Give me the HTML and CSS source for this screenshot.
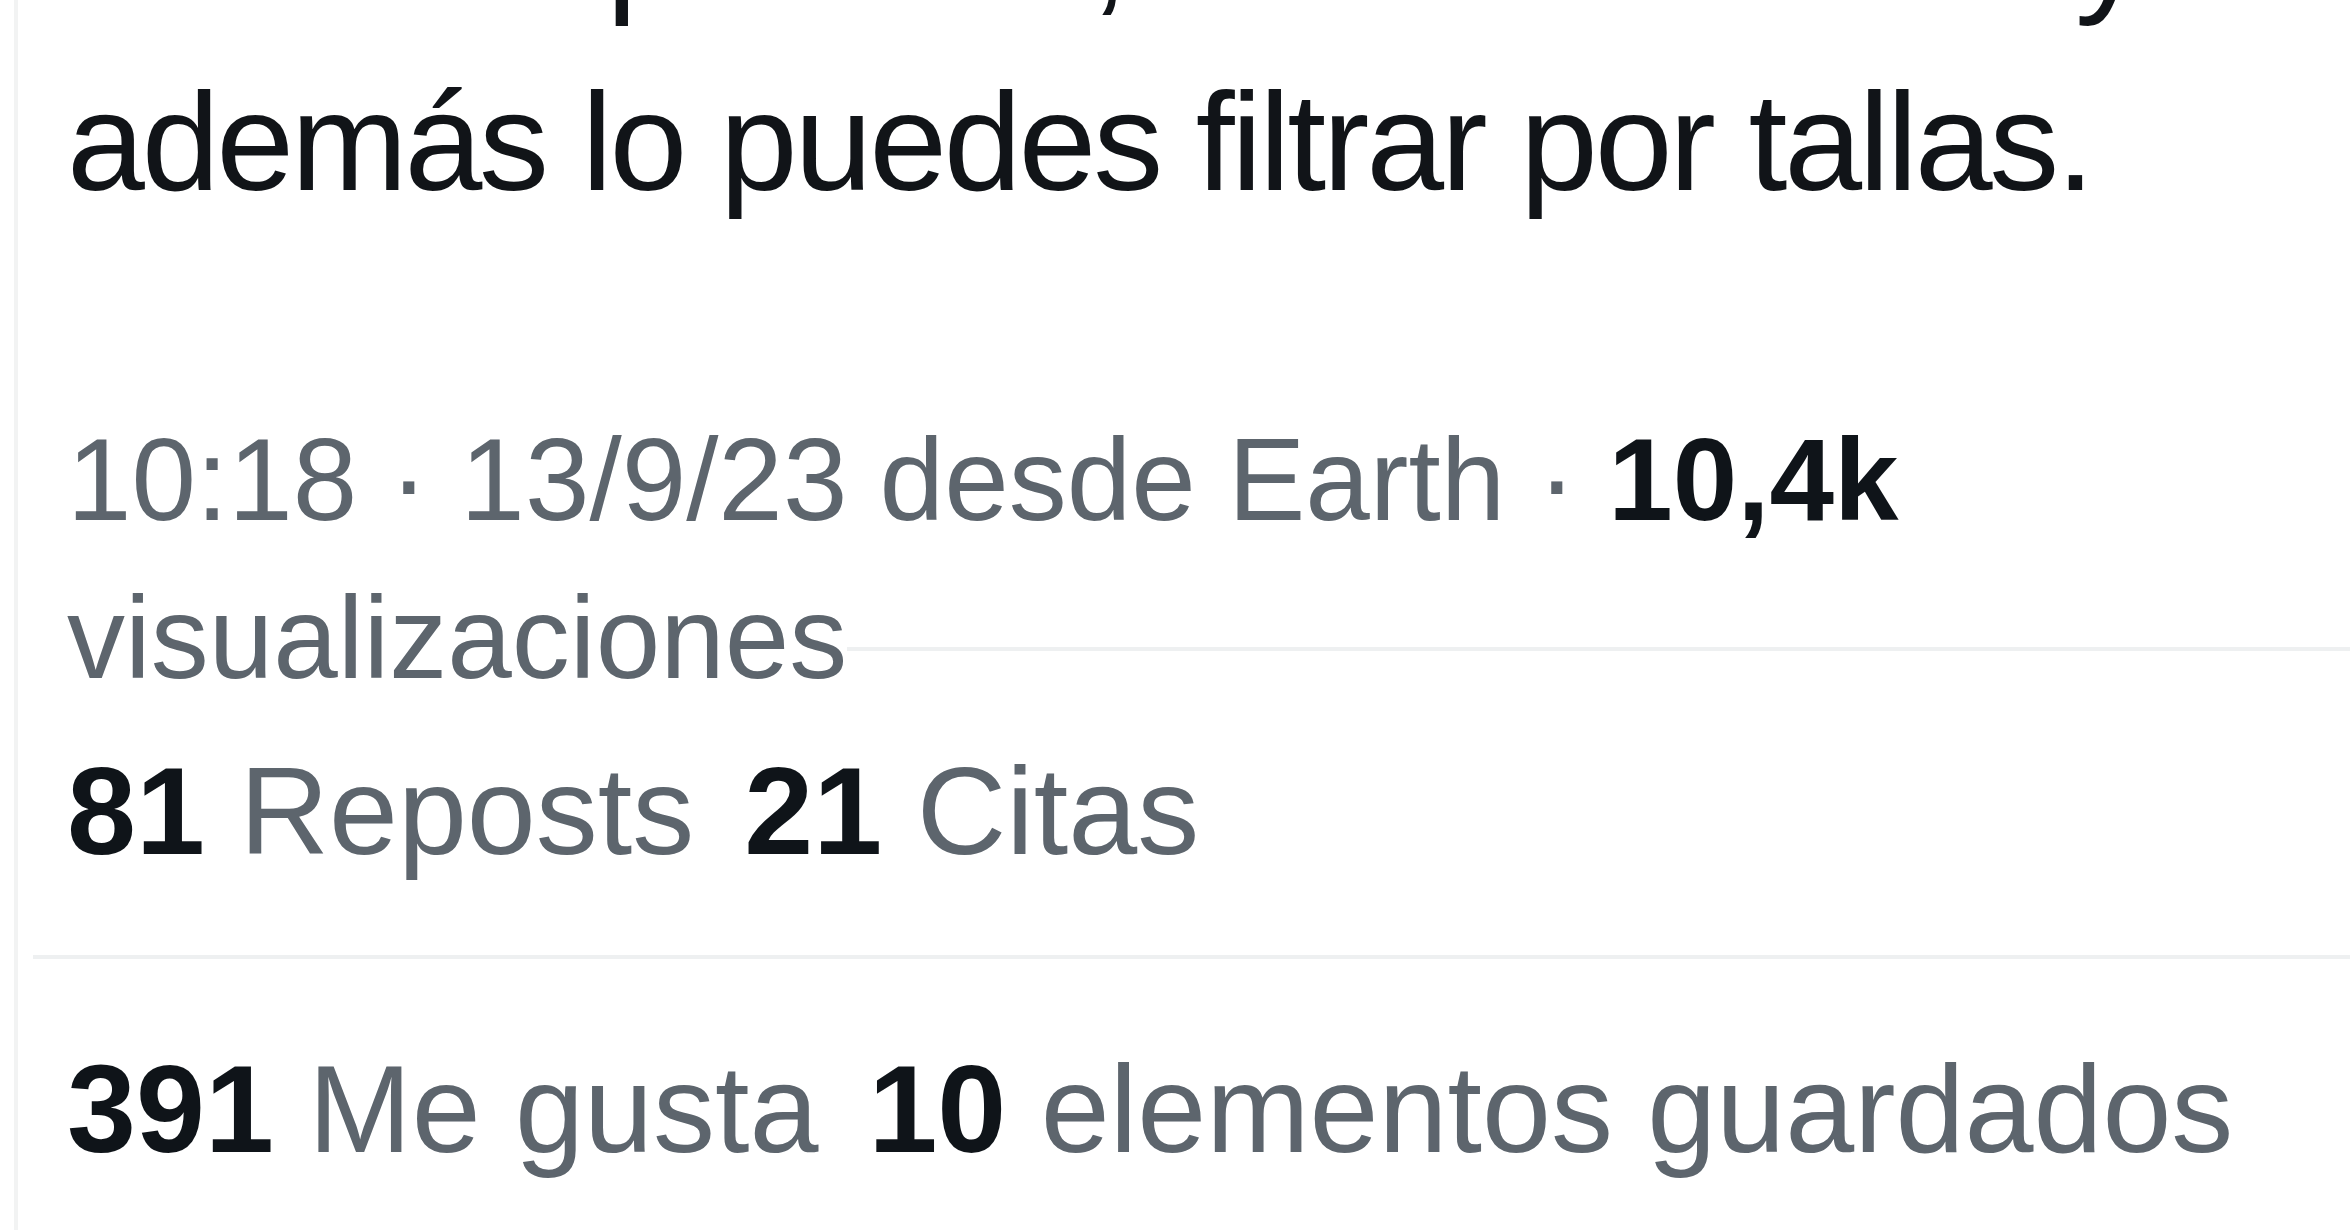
FILE: index.html
```
<!DOCTYPE html>
<html lang="es">
<head>
    <meta charset="UTF-8">
    <meta name="viewport" content="width=device-width, initial-scale=1.0">
    <title>Post</title>
    <link rel="stylesheet" href="styles.css">
</head>
<body>
    <article class="post">
        <!-- texto del post -->
        <div class="post-text">recién separadas, las divorciadas y además lo puedes filtrar por tallas.</div>

        <!-- fecha y vistas -->
        <div class="post-meta">
            <span class="meta-text">10:18 · 13/9/23 desde Earth · <b class="num">10,4k</b> visualizaciones</span>
        </div>

        <div class="stats-row first">
            <span class="stat"><b class="num">81</b> Reposts</span>
            <span class="stat"><b class="num">21</b> Citas</span>
        </div>
        <div class="stats-row second">
            <span class="stat"><b class="num">391</b> Me gusta</span>
            <span class="stat"><b class="num">10</b> elementos guardados</span>
        </div>
    </article>
</body>
</html>
```
FILE: styles.css
```
html {
    overflow: hidden;
}
html, body {
    margin: 0;
    padding: 0;
    background: #fff;
}
body {
    font-family: "Liberation Sans", Arial, sans-serif;
    color: #0f1419;
}
.post {
    margin-left: 14px;
    border-left: 4px solid #f2f3f3;
    padding-left: 15px;
    padding-bottom: 38px;
}
.post-text {
    margin-top: -148px;
    padding-left: 34px;
    width: 2100px;
    font-size: 140px;
    line-height: 193px;
    letter-spacing: -3.2px;
    color: #111418;
}
.post-meta {
    margin-top: 163px;
    height: 246px;
    border-bottom: 4px solid #eef0f1;
    font-size: 116px;
    line-height: 158px;
    color: #5d656d;
}
/* the second line of the meta runs over the divider, hiding it */
.meta-text {
    position: relative;
    z-index: 1;
    padding-left: 34px;
    background: #fff;
    -webkit-box-decoration-break: clone;
    box-decoration-break: clone;
}
.num {
    font-weight: 700;
    color: #0f1419;
}
.stats-row {
    display: flex;
    gap: 50px;
    padding-left: 34px;
    font-size: 124px;
    line-height: 165px;
    color: #5d656d;
    white-space: nowrap;
}
.stats-row.first {
    padding-top: 78px;
    padding-bottom: 61px;
    border-bottom: 4px solid #eef0f1;
}
.stats-row.second {
    padding-top: 68px;
}
```
